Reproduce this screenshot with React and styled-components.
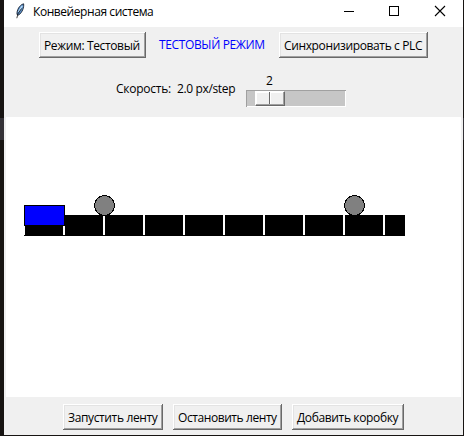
import React from "react";
import styled, { createGlobalStyle } from "styled-components";

const GlobalStyle = createGlobalStyle`
  * { box-sizing: border-box; }
  body { margin: 0; background: #171513; overflow: hidden; }
`;

const Desktop = styled.div`
  width: 464px;
  height: 436px;
  padding: 0 1px 1px 4px;
  background: linear-gradient(#171412 0 118px, #343237 118px 140px, #171412 140px);
  font: 12px/16px "Open Sans", "Noto Sans", sans-serif;
  color: #000;
`;

const Window = styled.div`
  display: flex;
  flex-direction: column;
  height: 435px;
  background: #f0f0f0;
`;

const TitleBar = styled.header`
  display: flex;
  height: 27px;
  padding-left: 11px;
  background: #fff;
`;

const Title = styled.div`
  flex: 1;
  padding: 4px 0 0 7px;
`;

const Controls = styled.svg`
  display: block;
  width: 138px;
  height: 27px;
  margin-right: 4px;
`;

const Feather = styled.svg`
  width: 11px;
  height: 16px;
  margin-top: 3px;
`;

const Label = styled.span`
  display: inline-block;
  white-space: nowrap;
  letter-spacing: ${(p) => p.$spacing ?? -0.36}px;
`;

const ModeRow = styled.div`
  display: flex;
  height: 36px;
  padding: 5px 0 0 35px;
`;

const ModeLabel = styled.div`
  width: 133px;
  padding: 5px 0 0 13px;
  color: #0000ff;
`;

const Button = styled.button`
  width: ${(p) => p.$width}px;
  height: 26px;
  flex: none;
  padding: 1px 0 0 5px;
  border: 0;
  background: #f0f0f0;
  box-shadow: inset -1px -1px #696969, inset 1px 1px #fff,
    inset -2px -2px #a0a0a0, inset 2px 2px #e3e3e3;
  color: #000;
  font: inherit;
  text-align: left;
`;

const SpeedRow = styled.div`
  display: flex;
  height: 54px;
  padding: 10px 0 0 112px;
`;

const SpeedCaption = styled.div`
  width: 61px;
  padding-top: 8px;
`;

const SpeedValue = styled.div`
  width: 69px;
  padding-top: 8px;
`;

const Scale = styled.div`
  width: 100px;
`;

const ScaleValue = styled.div`
  height: 17px;
  padding-left: 20px;
`;

const Trough = styled.div`
  height: 17px;
  padding: 1px 0 0 9px;
  background: #c6c6c6;
  box-shadow: inset 1px 1px #a0a0a0, inset -1px -1px #fff;
`;

const Thumb = styled.div`
  display: flex;
  width: 30px;
  height: 15px;
  border: 1px solid;
  border-color: #fff #696969 #696969 #fff;
  background: #f0f0f0;
  box-shadow: inset -1px -1px #a0a0a0, inset 1px 1px #fff;
`;

const Grip = styled.div`
  width: 14px;
  height: 12px;
  border-right: 1px solid #696969;
  box-shadow: 1px 0 #fff;
`;

const Canvas = styled.svg`
  display: block;
  width: 455px;
  height: 280px;
  margin-left: 2px;
  background: #fff;
`;

const Footer = styled.footer`
  display: flex;
  gap: 10px;
  padding: 7px 0 0 59px;
`;

const beltMarks = [17, 57, 97, 137, 177, 217, 257, 297, 337, 377];
const sensors = [98.5, 348.5];

function Conveyor() {
  return (
    <Canvas viewBox="0 0 455 280" shapeRendering="crispEdges">
      <rect x="18" y="98" width="381" height="21" />
      {beltMarks.map((x) => (
        <rect key={x} x={x} y="98" width="2" height="20" fill="#fff" />
      ))}
      {sensors.map((x) => (
        <circle key={x} cx={x} cy="88.5" r="10" fill="#808080" stroke="#000" />
      ))}
      <rect x="18.5" y="88.5" width="40" height="20" fill="#0000ff" stroke="#000" />
    </Canvas>
  );
}

export default function App() {
  return (
    <>
      <GlobalStyle />
      <Desktop>
        <Window>
          <TitleBar>
            <Feather viewBox="0 0 11 16">
              <path d="M2 11.5C1.6 7 4.6 2 8.6.8 9.2 4 7.4 9.6 3.6 12z" fill="#5d92cc" stroke="#17202e" strokeWidth=".9" />
              <path d="M3.6 9 7.2 2.8" stroke="#b9dcf7" strokeWidth="1.4" />
              <path d="M1.8 15.2 3 10.8 6.5 5.5" fill="none" stroke="#111" strokeWidth=".8" />
            </Feather>
            <Title><Label $spacing={-0.43}>Конвейерная система</Label></Title>
            <Controls viewBox="0 0 138 27" fill="none" stroke="#000">
              <path d="M23 11.5h10M68.5 6.5h9v9h-9z" shapeRendering="crispEdges" />
              <path d="m114 6 10 10m0-10-10 10" strokeWidth="1.1" />
            </Controls>
          </TitleBar>
          <ModeRow>
            <Button $width={107}><Label>Режим: Тестовый</Label></Button>
            <ModeLabel><Label>ТЕСТОВЫЙ РЕЖИМ</Label></ModeLabel>
            <Button $width={149}><Label>Синхронизировать с PLC</Label></Button>
          </ModeRow>
          <SpeedRow>
            <SpeedCaption><Label $spacing={-0.25}>Скорость:</Label></SpeedCaption>
            <SpeedValue><Label>2.0 px/step</Label></SpeedValue>
            <Scale>
              <ScaleValue>2</ScaleValue>
              <Trough><Thumb><Grip /></Thumb></Trough>
            </Scale>
          </SpeedRow>
          <Conveyor />
          <Footer>
            <Button $width={100}><Label>Запустить ленту</Label></Button>
            <Button $width={109}><Label $spacing={-0.42}>Остановить ленту</Label></Button>
            <Button $width={112}><Label>Добавить коробку</Label></Button>
          </Footer>
        </Window>
      </Desktop>
    </>
  );
}
